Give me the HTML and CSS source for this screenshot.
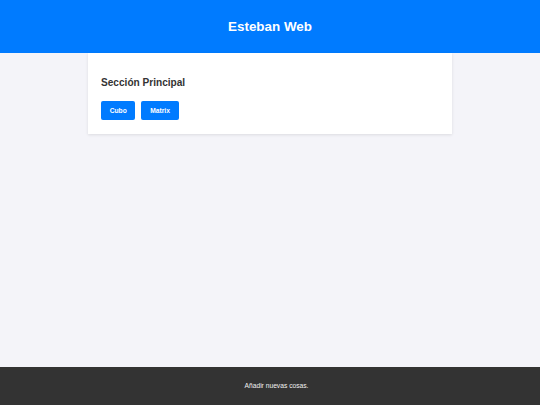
FILE: index.html
```html
<!DOCTYPE html>
<html lang="es">
<head>
<meta charset="utf-8">
<title>Esteban Web</title>
<link rel="stylesheet" href="styles.css">
</head>
<body>
<header class="site-header">
  <h1 class="site-title">Esteban Web</h1>
</header>
<main class="main">
  <section class="card">
    <h2 class="card-title">Sección Principal</h2>
    <div class="actions">
      <button class="btn">Cubo</button>
      <button class="btn">Matrix</button>
    </div>
  </section>
</main>
<footer class="site-footer">
  <p class="footer-text">Añadir nuevas cosas.</p>
</footer>
</body>
</html>
```
FILE: styles.css
```css
* { box-sizing: border-box; }
html, body { height: 100%; }
body {
  margin: 0;
  font-family: "Liberation Sans", Arial, sans-serif;
  background: #f4f4f9;
  color: #333;
  display: flex;
  flex-direction: column;
  min-height: 100vh;
}
.site-header {
  background: #007bff;
  height: 53px;
  display: flex;
  align-items: center;
  justify-content: center;
  flex-shrink: 0;
}
.site-title {
  margin: 0;
  color: #fff;
  font-size: 13.4px;
  font-weight: bold;
  line-height: 16px;
}
.main {
  flex: 1;
  display: flex;
  justify-content: center;
  align-items: flex-start;
}
.card {
  width: 364px;
  background: #fff;
  padding: 24px 13px 14px;
  box-shadow: 0 1px 3px rgba(0,0,0,0.1);
}
.card-title {
  margin: 0 0 12px;
  font-size: 10.1px;
  line-height: 12px;
  font-weight: bold;
  color: #333;
}
.actions {
  display: flex;
  gap: 6px;
}
.btn {
  font-family: "Liberation Sans", Arial, sans-serif;
  font-size: 6.7px;
  font-weight: bold;
  color: #fff;
  background: #007bff;
  border: none;
  border-radius: 2px;
  height: 19px;
  padding: 0 8.7px;
  line-height: 19px;
}
.site-footer {
  background: #333;
  height: 38px;
  display: flex;
  align-items: center;
  justify-content: center;
  padding-left: 13px;
  flex-shrink: 0;
}
.footer-text {
  margin: 0;
  color: #f2f2f2;
  font-size: 6.7px;
  line-height: 8px;
}
```
